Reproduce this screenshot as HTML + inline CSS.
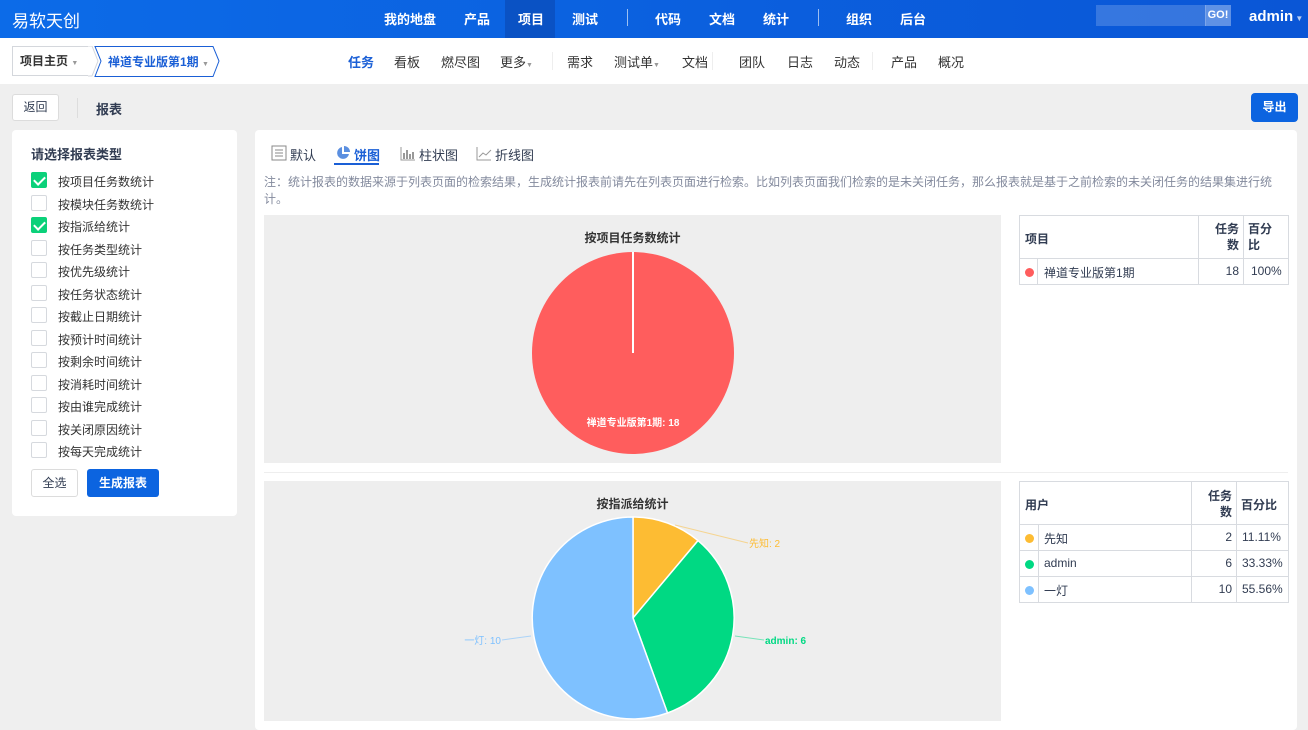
<!DOCTYPE html>
<html><head><meta charset="utf-8"><style>
*{margin:0;padding:0;box-sizing:border-box}
body{width:1308px;height:718px;overflow:hidden;background:#efefef;font-family:"Liberation Sans","Noto Sans CJK SC",sans-serif;font-size:13px;color:#313c52;position:relative}
.abs{position:absolute}
#hdr{left:0;top:0;width:1308px;height:38px;background:linear-gradient(90deg,#0c6be8,#0a56d6)}
#hdr .logo{left:12px;top:7px;color:#fff;font-size:17px}
#hdr .n{top:9px;color:#fff;font-size:13px;font-weight:bold}
.sep{width:1px;background:#fff;opacity:.6}
#sub{left:0;top:38px;width:1308px;height:46px;background:#fff}
.sn{top:52px;font-size:13px;color:#333}
.panel{background:#fff;border-radius:4px}
.cb{position:absolute;left:31px;width:16px;height:16px;border:1px solid #d6d9de;border-radius:2px;background:#fff}
.cb.on{background:#0bd17a;border-color:#0bd17a}
.cb.on:after{content:"";position:absolute;left:4px;top:1px;width:5px;height:9px;border:solid #fff;border-width:0 2px 2px 0;transform:rotate(45deg)}
.lbl{position:absolute;left:58px;font-size:12px;color:#333}
.dot{display:inline-block;width:9px;height:9px;border-radius:50%}
</style></head><body>
<div id="hdr" class="abs">
<div class="abs logo">易软天创</div>
<div class="abs" style="left:505px;top:0;width:50px;height:38px;background:#0a52c4"></div>
<div class="abs n" style="left:384px">我的地盘</div>
<div class="abs n" style="left:464px">产品</div>
<div class="abs n" style="left:518px">项目</div>
<div class="abs n" style="left:572px">测试</div>
<div class="abs sep" style="left:627px;top:9px;height:17px"></div>
<div class="abs n" style="left:655px">代码</div>
<div class="abs n" style="left:709px">文档</div>
<div class="abs n" style="left:763px">统计</div>
<div class="abs sep" style="left:818px;top:9px;height:17px"></div>
<div class="abs n" style="left:846px">组织</div>
<div class="abs n" style="left:900px">后台</div>
<div class="abs" style="left:1096px;top:5px;width:110px;height:21px;background:rgba(255,255,255,.18)"></div>
<div class="abs" style="left:1205px;top:5px;width:26px;height:21px;background:rgba(255,255,255,.35);color:#fff;font-size:11px;font-weight:bold;line-height:21px;text-align:center">GO!</div>
<div class="abs" style="left:1249px;top:8px;color:#fff;font-size:15px;font-weight:bold">admin<span style="font-size:8px;opacity:.7"> ▼</span></div>
</div>
<div id="sub" class="abs"></div>
<div class="abs" style="left:12px;top:46px;width:80px;height:30px;border:1px solid #d4d7dc;border-right:none;background:#fff;font-size:12px;font-weight:bold;line-height:28px;padding-left:7px;color:#333">项目主页 <span style="font-size:7px;color:#999">▼</span></div>
<svg class="abs" style="left:88px;top:46px" width="140" height="31"><path d="M0 0 L4 0 L10 15 L4 30 L0 30" fill="#fff" stroke="#d4d7dc"/><path d="M7 0.5 L125 0.5 L131 15 L125 30.5 L7 30.5 L13 15 Z" fill="#fff" stroke="#1a5fd6"/></svg>
<div class="abs" style="left:108px;top:53px;font-size:12px;font-weight:bold;color:#1a5fd6">禅道专业版第1期 <span style="font-size:7px;color:#999">▼</span></div>
<div class="abs sn" style="left:348px;color:#1a5fd6;font-weight:bold">任务</div>
<div class="abs sn" style="left:394px">看板</div>
<div class="abs sn" style="left:441px">燃尽图</div>
<div class="abs sn" style="left:500px">更多<span style="font-size:7px;color:#999">▼</span></div>
<div class="abs" style="left:552px;top:52px;width:1px;height:18px;background:#eee"></div>
<div class="abs sn" style="left:567px">需求</div>
<div class="abs sn" style="left:614px">测试单<span style="font-size:7px;color:#999">▼</span></div>
<div class="abs sn" style="left:682px">文档</div>
<div class="abs" style="left:712px;top:52px;width:1px;height:18px;background:#eee"></div>
<div class="abs sn" style="left:739px">团队</div>
<div class="abs sn" style="left:787px">日志</div>
<div class="abs sn" style="left:834px">动态</div>
<div class="abs" style="left:872px;top:52px;width:1px;height:18px;background:#eee"></div>
<div class="abs sn" style="left:891px">产品</div>
<div class="abs sn" style="left:938px">概况</div>

<div class="abs" style="left:12px;top:94px;width:47px;height:27px;background:#fff;border:1px solid #dcdcdc;border-radius:3px;font-size:12px;text-align:center;line-height:25px">返回</div>
<div class="abs" style="left:77px;top:98px;width:1px;height:20px;background:#ddd"></div>
<div class="abs" style="left:96px;top:99px;font-weight:bold;font-size:13px">报表</div>
<div class="abs" style="left:1251px;top:93px;width:47px;height:29px;background:#0c64e0;border-radius:4px;color:#fff;font-size:12px;font-weight:bold;text-align:center;line-height:29px">导出</div>

<div class="abs panel" style="left:12px;top:130px;width:225px;height:386px"></div>
<div class="abs" style="left:31px;top:144px;font-weight:bold;font-size:13px">请选择报表类型</div>
<div class="cb on" style="top:172px"></div><div class="lbl" style="top:173px">按项目任务数统计</div>
<div class="cb" style="top:195px"></div><div class="lbl" style="top:196px">按模块任务数统计</div>
<div class="cb on" style="top:217px"></div><div class="lbl" style="top:218px">按指派给统计</div>
<div class="cb" style="top:240px"></div><div class="lbl" style="top:241px">按任务类型统计</div>
<div class="cb" style="top:262px"></div><div class="lbl" style="top:263px">按优先级统计</div>
<div class="cb" style="top:285px"></div><div class="lbl" style="top:286px">按任务状态统计</div>
<div class="cb" style="top:307px"></div><div class="lbl" style="top:308px">按截止日期统计</div>
<div class="cb" style="top:330px"></div><div class="lbl" style="top:331px">按预计时间统计</div>
<div class="cb" style="top:352px"></div><div class="lbl" style="top:353px">按剩余时间统计</div>
<div class="cb" style="top:375px"></div><div class="lbl" style="top:376px">按消耗时间统计</div>
<div class="cb" style="top:397px"></div><div class="lbl" style="top:398px">按由谁完成统计</div>
<div class="cb" style="top:420px"></div><div class="lbl" style="top:421px">按关闭原因统计</div>
<div class="cb" style="top:442px"></div><div class="lbl" style="top:443px">按每天完成统计</div>
<div class="abs" style="left:31px;top:469px;width:47px;height:28px;border:1px solid #dcdcdc;border-radius:3px;font-size:12px;text-align:center;line-height:26px">全选</div>
<div class="abs" style="left:87px;top:469px;width:72px;height:28px;background:#0c64e0;border-radius:3px;color:#fff;font-size:12px;font-weight:bold;text-align:center;line-height:28px">生成报表</div>

<div class="abs panel" style="left:255px;top:130px;width:1042px;height:600px"></div>
<svg class="abs" style="left:271px;top:145px" width="16" height="16"><rect x="1" y="1" width="14" height="14" fill="none" stroke="#888"/><path d="M4 5h8M4 8h8M4 11h8" stroke="#888"/></svg>
<div class="abs" style="left:290px;top:145px">默认</div>
<svg class="abs" style="left:335px;top:145px" width="16" height="16"><path d="M7 2 A6 6 0 1 0 14 9 L7 9Z" fill="#5b8fe0"/><path d="M9 1 A6 6 0 0 1 15 7 L9 7Z" fill="#5b8fe0"/></svg>
<div class="abs" style="left:354px;top:145px;color:#1a5fd6;font-weight:bold">饼图</div>
<div class="abs" style="left:334px;top:163px;width:45px;height:2px;background:#1a5fd6"></div>
<svg class="abs" style="left:400px;top:145px" width="16" height="16"><path d="M1 2v13h14" fill="none" stroke="#999"/><path d="M4 8v6M7 5v9M10 9v5M13 7v7" stroke="#999" stroke-width="2"/></svg>
<div class="abs" style="left:419px;top:145px">柱状图</div>
<svg class="abs" style="left:476px;top:145px" width="16" height="16"><path d="M1 2v13h14" fill="none" stroke="#999"/><path d="M3 12l4-4 3 2 5-5" fill="none" stroke="#999"/></svg>
<div class="abs" style="left:495px;top:145px">折线图</div>
<div class="abs" style="left:264px;top:174px;width:1020px;font-size:12px;color:#838a9d;line-height:17px">注：统计报表的数据来源于列表页面的检索结果，生成统计报表前请先在列表页面进行检索。比如列表页面我们检索的是未关闭任务，那么报表就是基于之前检索的未关闭任务的结果集进行统计。</div>

<div class="abs" style="left:264px;top:215px;width:737px;height:248px;background:#eeeeee"></div>
<div class="abs" style="left:264px;top:229px;width:737px;text-align:center;font-weight:bold;font-size:12px;color:#333">按项目任务数统计</div>
<svg class="abs" style="left:264px;top:215px" width="737" height="248"><circle cx="369" cy="138" r="101" fill="#ff5d5d"/><line x1="369" y1="37" x2="369" y2="138" stroke="#fff" stroke-width="2"/><text x="369" y="211" fill="#fff" font-size="10" font-weight="bold" text-anchor="middle" font-family="Liberation Sans,Noto Sans CJK SC,sans-serif">禅道专业版第1期: 18</text></svg>
<div class="abs" style="left:1019px;top:215px;width:270px;height:70px;border:1px solid #d8dbe0;background:#fff"></div>
<div class="abs" style="left:1019px;top:258px;width:270px;height:1px;background:#d8dbe0"></div>
<div class="abs" style="left:1198px;top:215px;width:1px;height:70px;background:#d8dbe0"></div>
<div class="abs" style="left:1243px;top:215px;width:1px;height:70px;background:#d8dbe0"></div>
<div class="abs" style="left:1037px;top:258px;width:1px;height:27px;background:#d8dbe0"></div>
<div class="abs" style="left:1025px;top:230px;font-size:12px;font-weight:bold">项目</div>
<div class="abs" style="left:1203px;top:221px;width:36px;text-align:right;font-size:12px;font-weight:bold;line-height:16px">任务<br>数</div>
<div class="abs" style="left:1248px;top:221px;font-size:12px;font-weight:bold;line-height:16px">百分<br>比</div>
<span class="abs dot" style="left:1025px;top:268px;background:#ff5d5d"></span>
<div class="abs" style="left:1044px;top:264px;font-size:12px">禅道专业版第1期</div>
<div class="abs" style="left:1203px;top:264px;width:36px;text-align:right;font-size:12px">18</div>
<div class="abs" style="left:1251px;top:264px;font-size:12px">100%</div>

<div class="abs" style="left:264px;top:472px;width:1024px;height:1px;background:#eee"></div>

<div class="abs" style="left:264px;top:481px;width:737px;height:240px;background:#eeeeee"></div>
<div class="abs" style="left:264px;top:495px;width:737px;text-align:center;font-weight:bold;font-size:12px;color:#333">按指派给统计</div>
<svg class="abs" style="left:264px;top:481px" width="737" height="240" font-family="Liberation Sans,Noto Sans CJK SC,sans-serif" font-size="10">
<path d="M369 137 L369 36 A101 101 0 0 1 434 59.6 Z" fill="#fdbc33" stroke="#fff" stroke-width="1.5"/>
<path d="M369 137 L434 59.6 A101 101 0 0 1 403.5 232 Z" fill="#00d983" stroke="#fff" stroke-width="1.5"/>
<path d="M369 137 L403.5 232 A101 101 0 1 1 369 36 Z" fill="#7ec1ff" stroke="#fff" stroke-width="1.5"/>
<path d="M411 44 L484 62" stroke="#fdbc33" stroke-opacity=".5" fill="none"/>
<path d="M471 155 L500 159" stroke="#00d983" stroke-opacity=".5" fill="none"/>
<path d="M267 155 L238 159" stroke="#7ec1ff" stroke-opacity=".6" fill="none"/>
<text x="485" y="66" fill="#fdbc33">先知: 2</text>
<text x="501" y="163" fill="#00d983" font-weight="bold">admin: 6</text>
<text x="237" y="163" fill="#7ec1ff" text-anchor="end">一灯: 10</text>
</svg>
<div class="abs" style="left:1019px;top:481px;width:270px;height:122px;border:1px solid #d8dbe0;background:#fff"></div>
<div class="abs" style="left:1019px;top:524px;width:270px;height:1px;background:#d8dbe0"></div>
<div class="abs" style="left:1019px;top:550px;width:270px;height:1px;background:#d8dbe0"></div>
<div class="abs" style="left:1019px;top:576px;width:270px;height:1px;background:#d8dbe0"></div>
<div class="abs" style="left:1191px;top:481px;width:1px;height:122px;background:#d8dbe0"></div>
<div class="abs" style="left:1236px;top:481px;width:1px;height:122px;background:#d8dbe0"></div>
<div class="abs" style="left:1038px;top:524px;width:1px;height:79px;background:#d8dbe0"></div>
<div class="abs" style="left:1025px;top:496px;font-size:12px;font-weight:bold">用户</div>
<div class="abs" style="left:1196px;top:488px;width:36px;text-align:right;font-size:12px;font-weight:bold;line-height:16px">任务<br>数</div>
<div class="abs" style="left:1241px;top:496px;font-size:12px;font-weight:bold">百分比</div>
<span class="abs dot" style="left:1025px;top:534px;background:#fdbc33"></span>
<div class="abs" style="left:1044px;top:530px;font-size:12px">先知</div>
<div class="abs" style="left:1196px;top:530px;width:36px;text-align:right;font-size:12px">2</div>
<div class="abs" style="left:1242px;top:530px;font-size:12px">11.11%</div>
<span class="abs dot" style="left:1025px;top:560px;background:#00d983"></span>
<div class="abs" style="left:1044px;top:556px;font-size:12px">admin</div>
<div class="abs" style="left:1196px;top:556px;width:36px;text-align:right;font-size:12px">6</div>
<div class="abs" style="left:1242px;top:556px;font-size:12px">33.33%</div>
<span class="abs dot" style="left:1025px;top:586px;background:#7ec1ff"></span>
<div class="abs" style="left:1044px;top:582px;font-size:12px">一灯</div>
<div class="abs" style="left:1196px;top:582px;width:36px;text-align:right;font-size:12px">10</div>
<div class="abs" style="left:1242px;top:582px;font-size:12px">55.56%</div>
</body></html>
